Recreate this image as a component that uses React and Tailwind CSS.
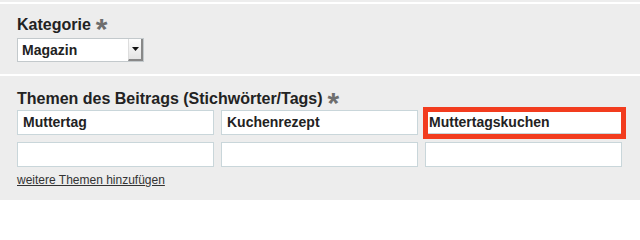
export default function App() {
  const tags = ['Muttertag', 'Kuchenrezept', 'Muttertagskuchen'];
  return (
    <div className="w-[640px] h-[200px] overflow-hidden bg-[#ededed] text-[#222]" style={{ fontFamily: '"Liberation Sans", Arial, sans-serif' }}>
      <div className="h-[2px]" />
      <div className="border-t-2 border-white h-[72px] pl-[17px] pt-[12px]">
        <div className="flex text-[16px] font-bold leading-[18px] h-[18px]">
          Kategorie
          <span className="ml-[5px] text-[30px] text-[#6e6e6e] leading-[18px] relative top-[4px]">*</span>
        </div>
        <div className="mt-[4px] w-[127px] h-[24px] flex bg-white border border-[#c3c9cc]">
          <div className="flex-1 flex items-center pl-[4px] text-[14px] font-bold">Magazin</div>
          <div className="w-[15px] h-full flex items-center justify-center bg-gradient-to-b from-[#fdfdfd] to-[#e4e4e4] border-l border-[#ddd] border-r-2 border-b-2 border-r-[#888] border-b-[#888]">
            <svg width="7" height="4" viewBox="0 0 7 4"><path d="M0 0h7L3.5 4z" fill="#111" /></svg>
          </div>
        </div>
      </div>
      <div className="border-t-2 border-white pl-[17px] pt-[14px]">
        <div className="flex text-[16px] font-bold leading-[18px] h-[18px]">
          Themen des Beitrags (Stichwörter/Tags)
          <span className="ml-[5px] text-[30px] text-[#6e6e6e] leading-[18px] relative top-[4px]">*</span>
        </div>
        <div className="mt-[2px] grid grid-cols-[197px_197px_197px] gap-x-[7px] gap-y-[7px]">
          {tags.map((t, i) =>
            i === 2 ? (
              <div key={t} className="-ml-[2px] -mr-[4px] -mt-[3px] -mb-[4px] border-[5px] border-[#f23c1e] bg-white">
                <div className="h-full flex items-center pl-[1px] text-[14px] font-bold border-b border-[#c9d6da]">{t}</div>
              </div>
            ) : (
              <div key={t} className="h-[25px] flex items-center pl-[5px] bg-white border border-[#c9d6da] text-[14px] font-bold">{t}</div>
            )
          )}
          {[0, 1, 2].map((i) => (
            <div key={i} className="h-[25px] bg-white border border-[#c9d6da]" />
          ))}
        </div>
        <a className="block mt-[6px] text-[12px] leading-[14px] text-[#333] underline">weitere Themen hinzufügen</a>
      </div>
    </div>
  );
}
